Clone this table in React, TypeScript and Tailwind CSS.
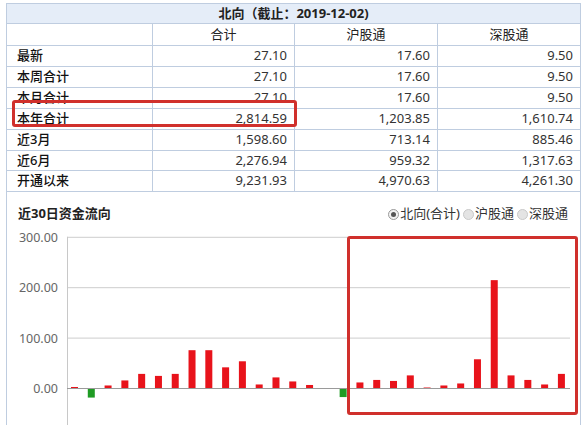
import React from "react";

const font = { fontFamily: '"Noto Sans", "Noto Sans CJK SC", sans-serif' };

const rows: [string, string, string, string, number][] = [
  ["最新", "27.10", "17.60", "9.50", 21],
  ["本周合计", "27.10", "17.60", "9.50", 21],
  ["本月合计", "27.10", "17.60", "9.50", 21],
  ["本年合计", "2,814.59", "1,203.85", "1,610.74", 21],
  ["近3月", "1,598.60", "713.14", "885.46", 21],
  ["近6月", "2,276.94", "959.32", "1,317.63", 20],
  ["开通以来", "9,231.93", "4,970.63", "4,261.30", 21],
];

const values = [2, -19, 5, 15, 28, 24, 28, 75, 75, 41, 53, 7, 21, 13, 6, 0, -18, 11, 16, 14, 25, 1, 5, 9, 57, 214, 25, 16, 7, 28];

function Chart() {
  // svg origin: page x = 7, page y = 228
  const zero = 160; // page 388
  const per = 0.504;
  const axisX = 60;
  const right = 563;
  const grid = [
    { v: "300.00", y: zero - 300 * per },
    { v: "200.00", y: zero - 200 * per },
    { v: "100.00", y: zero - 100 * per },
  ];
  return (
    <svg width={573} height={197} className="block">
      {grid.map((g) => (
        <g key={g.v}>
          <line x1={axisX} x2={right} y1={g.y + 0.5} y2={g.y + 0.5} stroke="#cdcdcd" strokeWidth={1} />
          <text x={51} y={g.y + 5} textAnchor="end" fontSize={12.5} fill="#666" style={font}>
            {g.v}
          </text>
        </g>
      ))}
      <text x={51} y={zero + 5} textAnchor="end" fontSize={12.5} fill="#666" style={font}>
        0.00
      </text>
      <line x1={axisX + 0.5} x2={axisX + 0.5} y1={grid[0].y} y2={197} stroke="#c8c8c8" strokeWidth={1} />
      {values.map((v, i) => {
        const cx = 74.5 - 7 + 16.79 * i;
        if (v === 0) return null;
        const h = Math.abs(v) * per;
        const y = v > 0 ? zero - h : zero;
        return <rect key={i} x={cx - 3.5} y={y} width={7} height={Math.max(h, 1.5)} fill={v > 0 ? "#e8131b" : "#1f9b24"} />;
      })}
      <line x1={axisX} x2={right} y1={zero + 0.5} y2={zero + 0.5} stroke="#9a9a9a" strokeWidth={1} />
    </svg>
  );
}

function Radio({ checked, label }: { checked?: boolean; label: string }) {
  return (
    <span className="flex items-center">
      <span
        className={
          checked
            ? "w-[11px] h-[11px] rounded-full border border-[#9a9a9a] bg-[#f2f2f2] flex items-center justify-center"
            : "w-[11px] h-[11px] rounded-full border border-[#c9c9c9] bg-[#e4e4e4]"
        }
      >
        {checked && <span className="w-[5px] h-[5px] rounded-full bg-[#555]" />}
      </span>
      <span className="ml-[1px]">{label}</span>
    </span>
  );
}

export default function App() {
  return (
    <div className="relative w-[586px] h-[425px] bg-white overflow-hidden text-[13px] text-[#222]" style={font}>
      <div className="ml-[6px] mt-[3px] w-[575px] border-l border-r border-t border-[#bfcde0]">
        <div className="h-[20px] bg-[#e5edf8] border-b border-[#bfcde0] flex items-center justify-center font-bold leading-none">
          北向（截止：2019-12-02)
        </div>
        <div className="grid grid-cols-[146px_142px_143px_142px] h-[22px] border-b border-[#bfcde0]">
          <div className="border-r border-[#bfcde0]" />
          <div className="border-r border-[#bfcde0] flex items-center justify-center">合计</div>
          <div className="border-r border-[#bfcde0] flex items-center justify-center">沪股通</div>
          <div className="flex items-center justify-center">深股通</div>
        </div>
        {rows.map((r) => (
          <div
            key={r[0]}
            className="grid grid-cols-[146px_142px_143px_142px] border-b border-[#bfcde0]"
            style={{ height: r[4] }}
          >
            <div className="border-r border-[#bfcde0] flex items-center pl-[10px] font-medium text-[#111]">{r[0]}</div>
            <div className="border-r border-[#bfcde0] flex items-center justify-end pr-[7px] text-[#333]">{r[1]}</div>
            <div className="border-r border-[#bfcde0] flex items-center justify-end pr-[7px] text-[#333]">{r[2]}</div>
            <div className="flex items-center justify-end pr-[7px] text-[#333]">{r[3]}</div>
          </div>
        ))}
        <div className="h-[36px] flex items-center justify-between pl-[11px] pr-[12px] pt-[8px]">
          <span className="font-bold">近30日资金流向</span>
          <div className="flex items-center gap-[3px] text-[#333]">
            <Radio checked label="北向(合计)" />
            <Radio label="沪股通" />
            <Radio label="深股通" />
          </div>
        </div>
        <Chart />
      </div>
      <div className="absolute left-[12px] top-[100px] w-[285px] h-[27px] border-[3px] border-[#d0302c] rounded-[3px]" />
      <div className="absolute left-[347px] top-[236px] w-[231px] h-[179px] border-[3px] border-[#d0302c] rounded-[3px]" />
    </div>
  );
}
